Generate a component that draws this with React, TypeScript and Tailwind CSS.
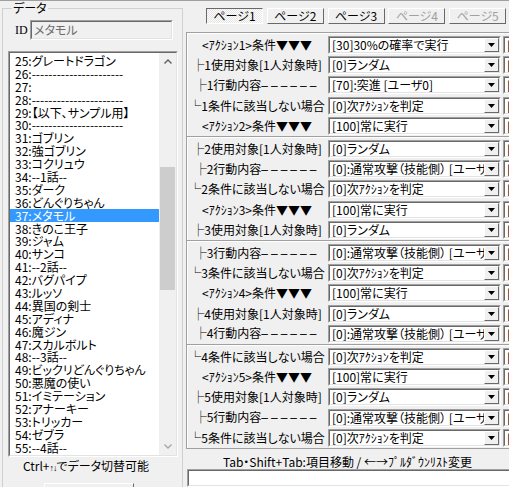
const monsters = [
  "25:グレートドラゴン",
  "26:----------------------",
  "27:",
  "28:----------------------",
  "29:【以下、サンプル用】",
  "30:----------------------",
  "31:ゴブリン",
  "32:強ゴブリン",
  "33:コクリュウ",
  "34:--1話--",
  "35:ダーク",
  "36:どんぐりちゃん",
  "37:メタモル",
  "38:きのこ王子",
  "39:ジャム",
  "40:サンコ",
  "41:--2話--",
  "42:バグパイプ",
  "43:ルッソ",
  "44:異国の剣士",
  "45:アディナ",
  "46:魔ジン",
  "47:スカルボルト",
  "48:--3話--",
  "49:ビックリどんぐりちゃん",
  "50:悪魔の使い",
  "51:イミテーション",
  "52:アナーキー",
  "53:トリッカー",
  "54:ゼブラ",
  "55:--4話--",
];

const pages = ["ページ1", "ページ2", "ページ3", "ページ4", "ページ5"];

type Row = { label: React.ReactNode; value: string };

const actionRows = (n: number): Row[] => [
  { label: `<ｱｸｼｮﾝ${n}>条件▼▼▼`, value: n === 1 ? "[30]30%の確率で実行" : "[100]常に実行" },
  { label: `├${n}使用対象[1人対象時]`, value: "[0]ランダム" },
  {
    label: (
      <>
        ├{n}行動内容<span className="font-['Liberation_Sans',sans-serif] tracking-[3px]">––––––</span>
      </>
    ),
    value: n === 1 ? "[70]:突進 [ユーザ0]" : "[0]:通常攻撃（技能側） [ユーザ0]",
  },
  { label: `└${n}条件に該当しない場合`, value: "[0]次ｱｸｼｮﾝを判定" },
];

const rows = [1, 2, 3, 4, 5].flatMap(actionRows);
const groups = [rows.slice(0, 5), rows.slice(5, 10), rows.slice(10, 15), rows.slice(15, 20)];

const DownArrow = () => (
  <svg width="7" height="4" viewBox="0 0 7 4">
    <polygon points="0,0 7,0 3.5,4" fill="#000" />
  </svg>
);

const Combo = ({ value }: { value: string }) => (
  <div className="w-[173px] h-[18px] shrink-0 flex border border-[#a0a0a0] border-b-white border-r-white">
    <div className="flex-1 flex min-w-0 border border-[#696969] border-b-[#e3e3e3] border-r-[#e3e3e3] bg-white">
      <span className="flex-1 min-w-0 overflow-hidden whitespace-nowrap pl-[2px] leading-[14px]">{value}</span>
      <div className="w-[15px] h-full shrink-0 flex items-center justify-center bg-[#f0f0f0] border border-white border-b-[#696969] border-r-[#696969]">
        <DownArrow />
      </div>
    </div>
  </div>
);

const PageButton = ({ label, i }: { label: string; i: number }) => {
  if (i === 0) {
    return (
      <div className="w-[57px] h-[16px] flex items-center justify-center border border-[#696969] border-b-white border-r-white bg-[repeating-conic-gradient(#ffffff_0_25%,#e4e4e4_0_50%)] bg-[length:2px_2px] leading-[14px]">
        {label}
      </div>
    );
  }
  return (
    <div
      className={
        i > 2
          ? "w-[57px] h-[16px] flex items-center justify-center border border-white border-b-[#696969] border-r-[#696969] bg-[#f0f0f0] leading-[14px] text-[#a0a0a0]"
          : "w-[57px] h-[16px] flex items-center justify-center border border-white border-b-[#696969] border-r-[#696969] bg-[#f0f0f0] leading-[14px]"
      }
    >
      {label}
    </div>
  );
};

export default function App() {
  return (
    <div className="w-[509px] h-[487px] overflow-hidden bg-[#f0f0f0] border-t border-[#a0a0a0] flex text-[12px] text-black font-['Noto_Sans_CJK_JP',sans-serif] [font-feature-settings:'palt']">
      {/* left: data list */}
      <div className="w-[183px] shrink-0 pl-[2px]">
        <fieldset className="mt-[1px] w-[181px] h-[520px] border border-[#d0d0d0]">
          <legend className="ml-[9px] px-[1px] leading-[12px]">データ</legend>
          <div className="mt-[6px] flex items-center pl-[12px]">
            <span className="w-[15px] font-['Liberation_Serif',serif] text-[12px]">ID</span>
            <div className="w-[143px] h-[20px] border border-[#a0a0a0] border-b-white border-r-white">
              <div className="h-full border border-[#696969] border-b-[#e3e3e3] border-r-[#e3e3e3] bg-[#f0f0f0] pl-[2px] leading-[16px] text-[#6d6d6d]">
                メタモル
              </div>
            </div>
          </div>
          <div className="mt-[11px] ml-[5px] w-[170px] h-[406px] border border-[#a0a0a0] border-b-white border-r-white">
            <div className="h-full flex border border-[#696969] border-b-[#e3e3e3] border-r-[#e3e3e3]">
              <div className="flex-1 min-w-0 bg-white pt-[1px] overflow-hidden">
                {monsters.map((m) =>
                  m === "37:メタモル" ? (
                    <div key={m} className="h-[12.9px] leading-[13px] pl-[5px] whitespace-nowrap bg-[#3399ff] text-white">
                      {m}
                    </div>
                  ) : (
                    <div key={m} className="h-[12.9px] leading-[13px] pl-[5px] whitespace-nowrap">
                      {m}
                    </div>
                  )
                )}
              </div>
              <div className="w-[17px] shrink-0 flex flex-col bg-[#f0f0f0]">
                <div className="h-[17px] flex items-center justify-center">
                  <svg width="8" height="5" viewBox="0 0 8 5">
                    <polyline points="0.5,4.5 4,1 7.5,4.5" fill="none" stroke="#606060" strokeWidth="1.4" />
                  </svg>
                </div>
                <div className="h-[97px]" />
                <div className="h-[123px] mx-[1px] bg-[#cdcdcd]" />
                <div className="flex-1" />
                <div className="h-[17px] flex items-center justify-center">
                  <svg width="8" height="5" viewBox="0 0 8 5">
                    <polyline points="0.5,0.5 4,4 7.5,0.5" fill="none" stroke="#a6a6a6" strokeWidth="1.4" />
                  </svg>
                </div>
              </div>
            </div>
          </div>
          <div className="mt-[2px] w-[166px] text-center leading-[13px]">
            Ctrl+<span className="font-['Liberation_Sans',sans-serif] text-[9px] tracking-[-1px]">↑↓</span>でデータ切替可能
          </div>
          <div className="mt-[8px] ml-[41px] w-[90px] h-[24px] border border-white border-b-[#696969] border-r-[#696969] flex justify-center leading-[20px]">
            データ数の設定
          </div>
        </fieldset>
      </div>

      {/* right: action editor */}
      <div className="w-[340px] shrink-0 pl-[3px] flex flex-col">
        <div className="mt-[7px] ml-[20px] flex gap-[3.8px]">
          {pages.map((p, i) => (
            <PageButton key={p} label={p} i={i} />
          ))}
        </div>
        <div className="mt-[8px] border-l border-b border-[#a0a0a0]">
          {groups.map((g, gi) => (
            <div key={gi} className="h-[104px] pt-[2px] border-t border-[#a0a0a0] shadow-[inset_1px_1px_0_#ffffff]">
              {g.map((r, ri) => (
                <div key={ri} className="h-[20.2px] flex items-center">
                  <div className="w-[140px] shrink-0 text-center whitespace-nowrap leading-[14px]">{r.label}</div>
                  <div className="ml-[1px]">
                    <Combo value={r.value} />
                  </div>
                  <div className="ml-[2px]">
                    <Combo value="[0]なし" />
                  </div>
                </div>
              ))}
            </div>
          ))}
        </div>
        <div className="pt-[6px] w-[323px] text-center leading-[13px] whitespace-nowrap">
          Tab・Shift+Tab:項目移動 / ←→ﾌﾟﾙﾀﾞｳﾝﾘｽﾄ変更
        </div>
        <div className="mt-[1px] ml-[1px] h-[40px] border border-[#a0a0a0] border-b-white border-r-white">
          <div className="h-full border border-[#696969] border-b-[#e3e3e3] border-r-[#e3e3e3] bg-white" />
        </div>
      </div>
    </div>
  );
}
